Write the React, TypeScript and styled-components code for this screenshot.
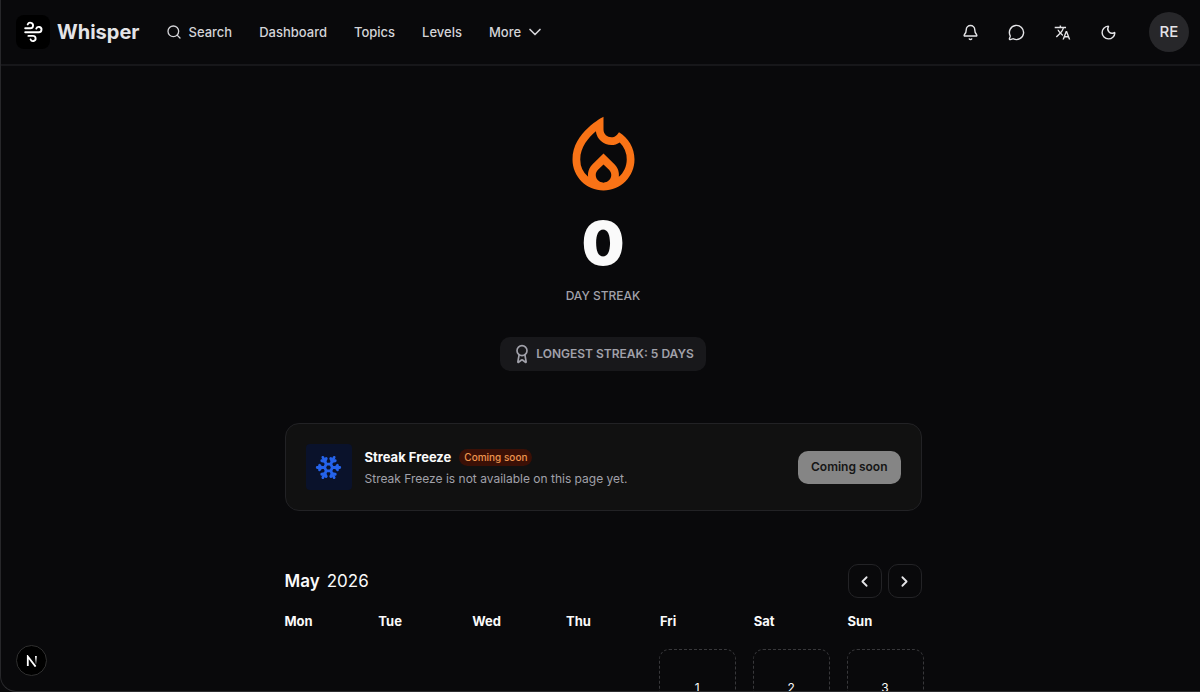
import React from "react";
import styled, { createGlobalStyle } from "styled-components";
import {
  Award,
  Bell,
  ChevronDown,
  ChevronLeft,
  ChevronRight,
  MessageCircle,
  Moon,
  Search,
  Snowflake,
} from "lucide-react";
import { MdOutlineLocalFireDepartment, MdTranslate } from "react-icons/md";

const GlobalStyle = createGlobalStyle`
  *, *::before, *::after { box-sizing: border-box; }
  body {
    margin: 0;
    background: #09090b;
    color: #fafafa;
    font-family: Inter, "Liberation Sans", sans-serif;
    font-size: 14px;
    line-height: 20px;
    overflow: hidden;
  }
  button { font: inherit; cursor: pointer; }
  h1, h2, p { margin: 0; }
`;

const Page = styled.div`
  height: 100vh;
  overflow: hidden;
  border-left: 1px solid #27272a;
  border-bottom: 1px solid #2d2d30;
  border-bottom-left-radius: 16px;
`;

const Header = styled.header`
  display: flex;
  align-items: center;
  height: 66px;
  padding: 0 11px 0 15px;
  border-bottom: 2px solid #17171a;
`;

const Brand = styled.a`
  display: flex;
  align-items: center;
  gap: 7px;
  margin-right: 26px;
  color: #e4e4e7;
  font-size: 20px;
  font-weight: 700;
  text-decoration: none;
`;

const Logo = styled.span`
  display: grid;
  place-items: center;
  width: 34px;
  height: 34px;
  border-radius: 8px;
  background: #000;
  color: #fff;
`;

const Nav = styled.nav`
  display: flex;
  align-items: center;
  gap: 27px;
`;

const NavLink = styled.a`
  display: flex;
  align-items: center;
  gap: 7px;
  color: #d4d4d8;
  font-size: 13px;
  font-weight: 500;
  text-decoration: none;
`;

const NavButton = styled.button`
  display: flex;
  align-items: center;
  gap: 4px;
  padding: 0;
  border: 0;
  background: none;
  color: #d4d4d8;
  && {
    font-size: 13px;
    font-weight: 500;
  }
`;

const Tools = styled.div`
  display: flex;
  align-items: center;
  gap: 12px;
  margin-left: auto;
`;

const ToolButton = styled.button`
  display: grid;
  place-items: center;
  width: 34px;
  height: 34px;
  padding: 0;
  border: 0;
  background: none;
  color: #e4e4e7;
`;

const Avatar = styled.button`
  width: 40px;
  height: 40px;
  margin-left: 12px;
  padding: 0;
  border: 0;
  border-radius: 50%;
  background: #27272a;
  color: #e4e4e7;
  font-size: 15px;
  font-weight: 500;
`;

const Scroll = styled.div`
  padding: 43px 16px 0 21px;
`;

const Main = styled.main`
  width: 100%;
  max-width: 637px;
  margin: 0 auto;
`;

const Hero = styled.section`
  display: flex;
  flex-direction: column;
  align-items: center;
`;

const Count = styled.h1`
  margin-top: 11px;
  font-size: 60px;
  font-weight: 900;
  line-height: 60px;
`;

const Caption = styled.p`
  margin-top: 13px;
  color: #a1a1aa;
  font-size: 12px;
  font-weight: 500;
`;

const Longest = styled.p`
  display: flex;
  align-items: center;
  gap: 4px;
  height: 34px;
  margin-top: 31px;
  padding: 0 12px;
  border-radius: 10px;
  background: #18181b;
  color: #a1a1aa;
  font-size: 12px;
  font-weight: 600;
`;

const Card = styled.section`
  display: flex;
  align-items: center;
  gap: 13px;
  height: 88px;
  margin-top: 52px;
  padding: 0 20px;
  border: 1px solid #222225;
  border-radius: 14px;
  background: #111111;
`;

const FreezeIcon = styled.span`
  display: grid;
  place-items: center;
  width: 46px;
  height: 46px;
  border-radius: 4px;
  background: #0a122b;
  color: #2563eb;
`;

const CardText = styled.div`
  flex: 1;
  padding-top: 2px;
`;

const CardTitle = styled.h2`
  display: flex;
  align-items: center;
  gap: 8px;
  font-size: 13px;
  font-weight: 700;
`;

const Badge = styled.span`
  height: 17px;
  padding: 0 5px;
  border-radius: 9px;
  background: #3b1006;
  color: #ee964f;
  font-size: 10px;
  font-weight: 500;
  line-height: 17px;
`;

const CardNote = styled.p`
  margin-top: 2px;
  color: #a1a1aa;
  font-size: 12px;
`;

const SoonButton = styled.button`
  height: 33px;
  padding: 0 13px;
  border: 0;
  border-radius: 10px;
  background: #858585;
  color: #151515;
  font-size: 12px;
  font-weight: 600;
`;

const CalendarHead = styled.div`
  display: flex;
  align-items: center;
  gap: 6px;
  margin-top: 53px;
`;

const Month = styled.h2`
  flex: 1;
  font-size: 17px;
  font-weight: 600;
`;

const Year = styled.span`
  margin-left: 7px;
  font-weight: 400;
`;

const StepButton = styled.button`
  display: grid;
  place-items: center;
  width: 34px;
  height: 34px;
  padding: 0;
  border: 1px solid #232326;
  border-radius: 10px;
  background: none;
  color: #e4e4e7;
`;

const Calendar = styled.table`
  width: calc(100% + 20px);
  margin: 2px 0 0 -1px;
  border-collapse: collapse;
  table-layout: fixed;
`;

const Weekday = styled.th`
  height: 41px;
  padding: 0 0 0 1px;
  font-size: 13px;
  font-weight: 700;
  text-align: left;
`;

const DayCell = styled.td`
  height: 94px;
  padding: 8px 17px 0 0;
  vertical-align: top;
`;

const Day = styled.button`
  display: block;
  width: 100%;
  height: 77px;
  padding: 0;
  border: 1px dashed #38383b;
  border-radius: 10px;
  background: none;
  color: #fafafa;
  font-size: 12px;
`;

const DevButton = styled.button`
  position: fixed;
  left: 16px;
  bottom: 16px;
  display: grid;
  place-items: center;
  width: 31px;
  height: 31px;
  padding: 0;
  border: 1px solid #303030;
  border-radius: 50%;
  background: #000;
`;

const weekdays = ["Mon", "Tue", "Wed", "Thu", "Fri", "Sat", "Sun"];
const firstWeek = [null, null, null, null, 1, 2, 3];

function WindMark() {
  return (
    <svg
      width="34"
      height="34"
      viewBox="0 0 34 34"
      fill="none"
      stroke="currentColor"
      strokeWidth="1.9"
      strokeLinecap="round"
      strokeLinejoin="round"
      aria-hidden="true"
    >
      <path d="M9.2 13.3H14.3A2.8 2.8 0 1 0 11.7 9.4" />
      <path d="M9.2 17.3H22.8A2.7 2.7 0 1 0 20.3 13.6" />
      <path d="M12.4 20.9H17A2.6 2.6 0 1 1 14.6 24.5" />
    </svg>
  );
}

export default function App() {
  return (
    <>
      <GlobalStyle />
      <Page>
        <Header>
          <Brand href="#">
            <Logo>
              <WindMark />
            </Logo>
            Whisper
          </Brand>
          <Nav>
            <NavLink href="#search">
              <Search size={16} strokeWidth={2} />
              Search
            </NavLink>
            <NavLink href="#dashboard">Dashboard</NavLink>
            <NavLink href="#topics">Topics</NavLink>
            <NavLink href="#levels">Levels</NavLink>
            <NavButton>
              More
              <ChevronDown size={20} strokeWidth={2} />
            </NavButton>
          </Nav>
          <Tools>
            <ToolButton aria-label="Notifications">
              <Bell size={17} strokeWidth={2} />
            </ToolButton>
            <ToolButton aria-label="Messages">
              <MessageCircle size={17} strokeWidth={2} />
            </ToolButton>
            <ToolButton aria-label="Language">
              <MdTranslate size={17} />
            </ToolButton>
            <ToolButton aria-label="Theme">
              <Moon size={17} strokeWidth={2} />
            </ToolButton>
            <Avatar aria-label="Account">RE</Avatar>
          </Tools>
        </Header>
        <Scroll>
          <Main>
            <Hero>
              <MdOutlineLocalFireDepartment size={93} color="#f97316" />
              <Count>0</Count>
              <Caption>DAY STREAK</Caption>
              <Longest>
                <Award size={20} strokeWidth={2} />
                LONGEST STREAK: 5 DAYS
              </Longest>
            </Hero>
            <Card>
              <FreezeIcon>
                <Snowflake size={27} strokeWidth={2.5} />
              </FreezeIcon>
              <CardText>
                <CardTitle>
                  Streak Freeze
                  <Badge>Coming soon</Badge>
                </CardTitle>
                <CardNote>
                  Streak Freeze is not available on this page yet.
                </CardNote>
              </CardText>
              <SoonButton>Coming soon</SoonButton>
            </Card>
            <CalendarHead>
              <Month>
                May
                <Year>2026</Year>
              </Month>
              <StepButton aria-label="Previous month">
                <ChevronLeft size={17} strokeWidth={2.5} />
              </StepButton>
              <StepButton aria-label="Next month">
                <ChevronRight size={17} strokeWidth={2.5} />
              </StepButton>
            </CalendarHead>
            <Calendar>
              <thead>
                <tr>
                  {weekdays.map((name) => (
                    <Weekday key={name} scope="col">
                      {name}
                    </Weekday>
                  ))}
                </tr>
              </thead>
              <tbody>
                <tr>
                  {firstWeek.map((day, i) => (
                    <DayCell key={i}>{day && <Day>{day}</Day>}</DayCell>
                  ))}
                </tr>
              </tbody>
            </Calendar>
          </Main>
        </Scroll>
        <DevButton aria-label="Developer tools">
          <svg width="12" height="12" viewBox="0 0 12 12" fill="none">
            <defs>
              <linearGradient id="stem" x1="0" y1="0" x2="0" y2="1">
                <stop offset="0" stopColor="#fff" />
                <stop offset="1" stopColor="#fff" stopOpacity="0.1" />
              </linearGradient>
            </defs>
            <path d="M1.8 11V1.5L9.6 11.6" stroke="#fff" strokeWidth="1.8" />
            <rect x="9" y="1" width="1.8" height="8" fill="url(#stem)" />
          </svg>
        </DevButton>
      </Page>
    </>
  );
}
